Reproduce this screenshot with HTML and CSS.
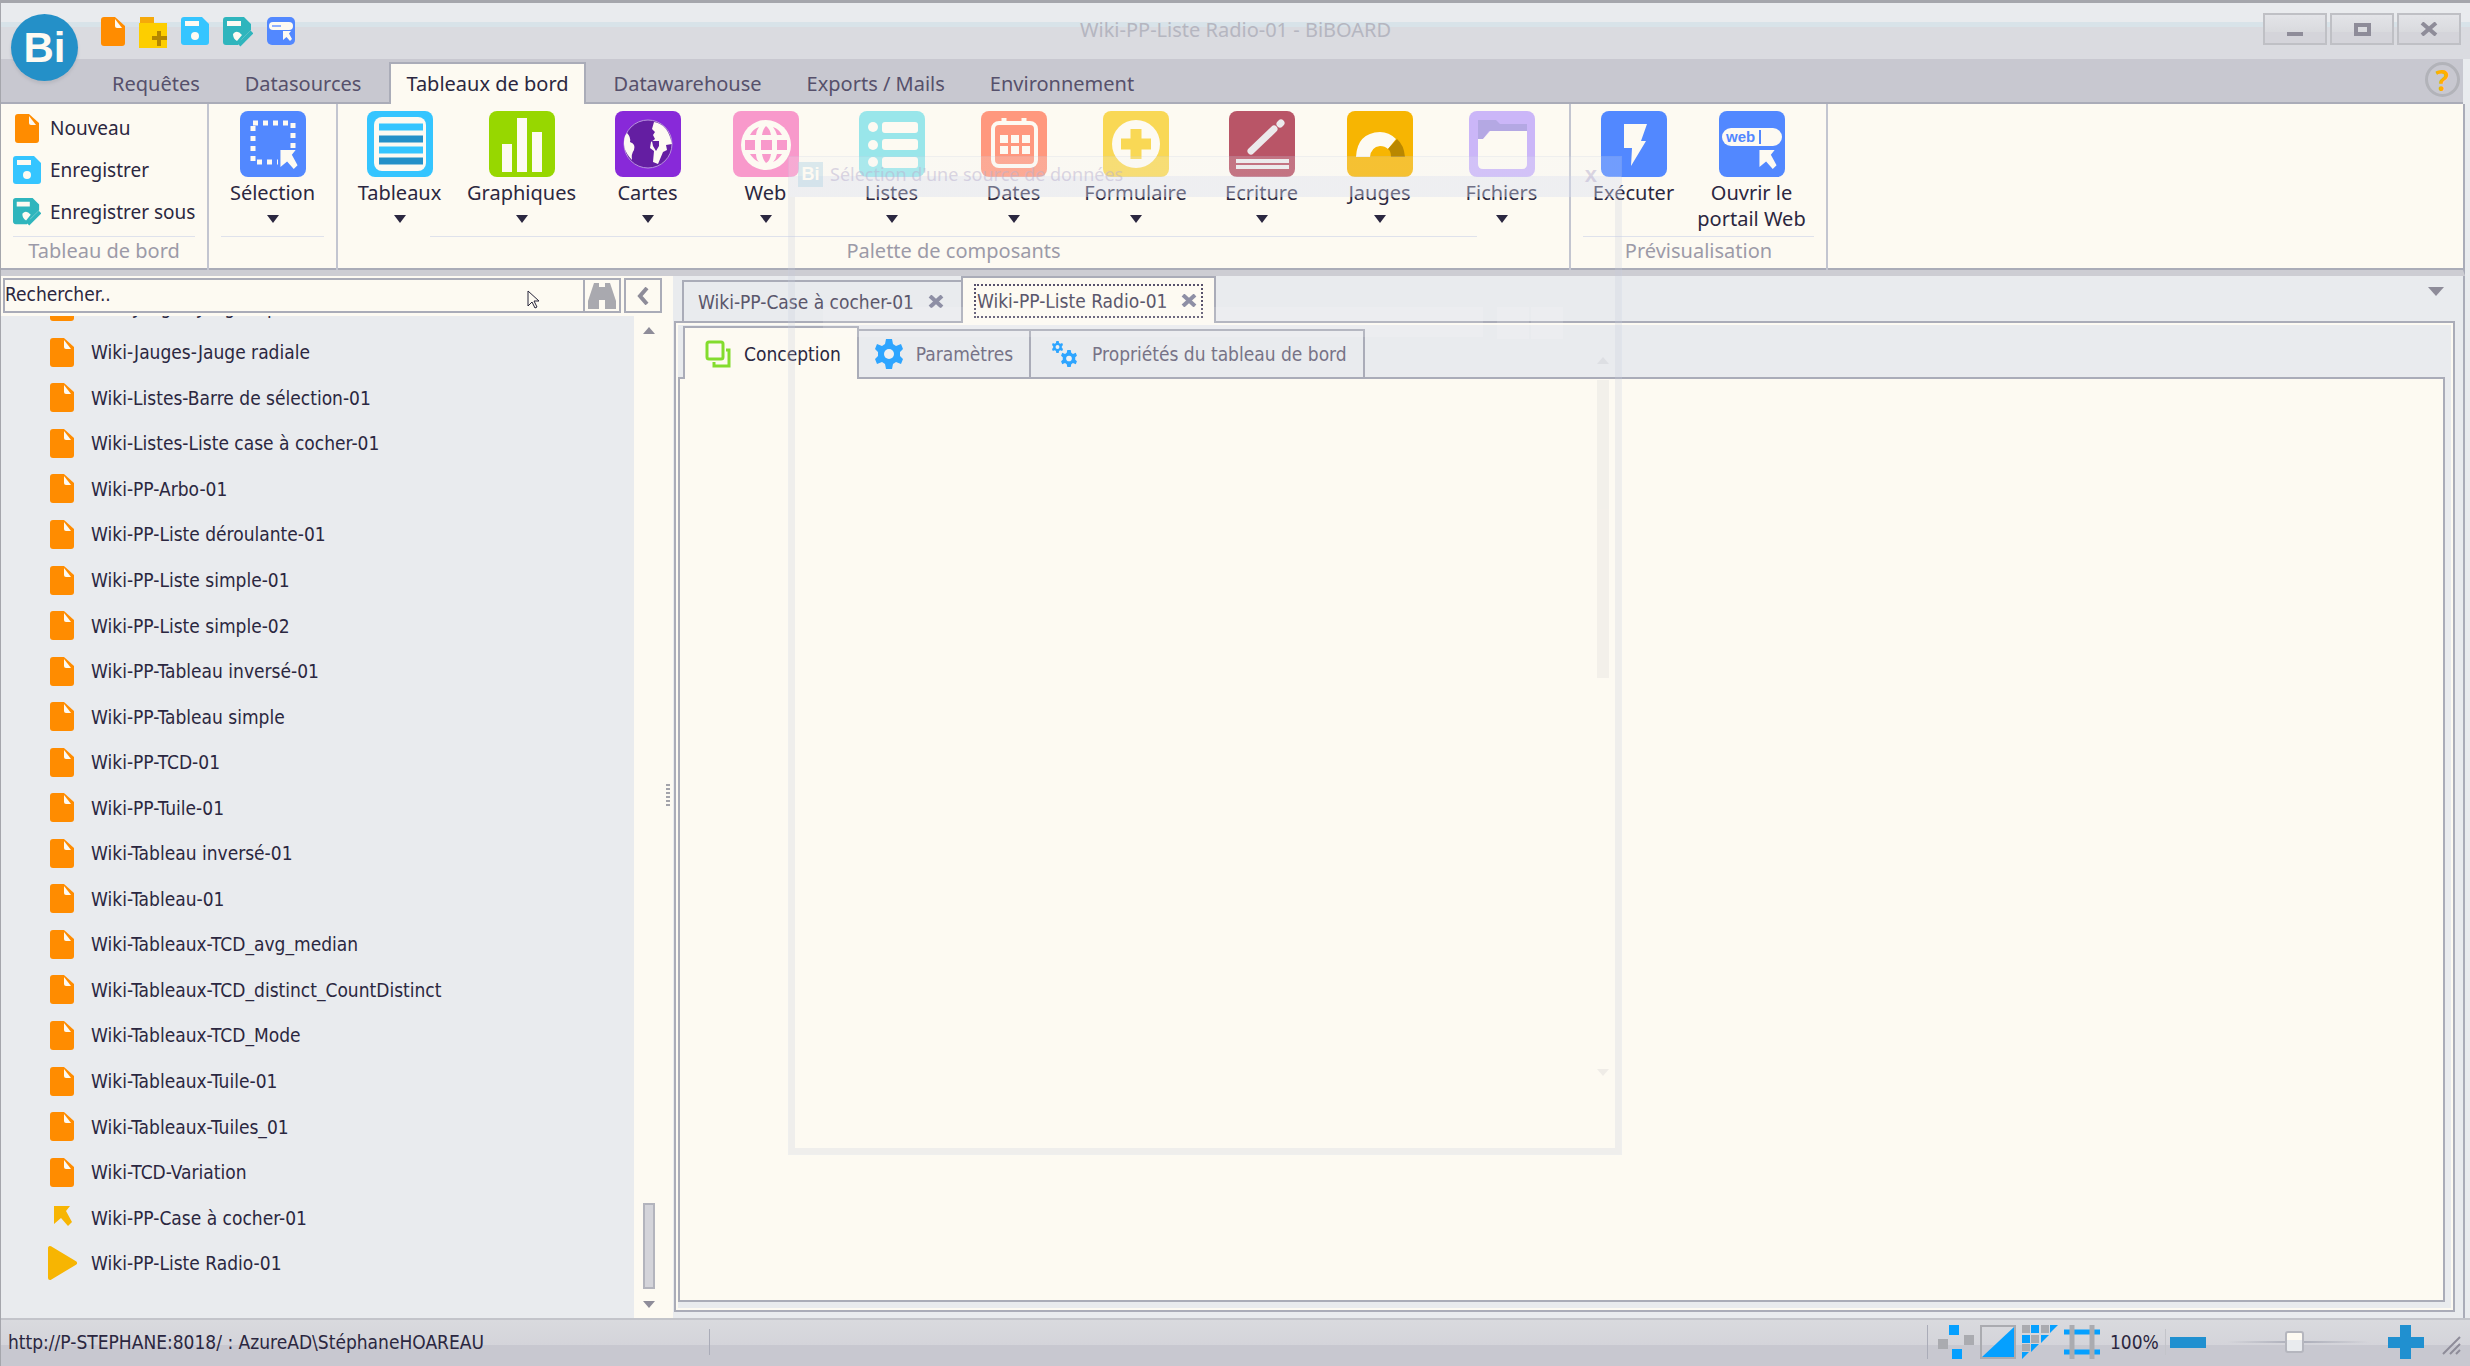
FILE: index.html
```html
<!DOCTYPE html>
<html lang="fr">
<head>
    <meta charset="UTF-8">
    <title>Wiki-PP-Liste Radio-01 - BiBOARD</title>
    <link rel="stylesheet" href="styles.css">
</head>
<body>
<svg class="sprite" aria-hidden="true">
    <symbol id="doc" viewBox="0 0 24 29">
        <path fill="#ff8c00" d="M3 0h11l10 9v17q0 3-3 3H3q-3 0-3-3V3q0-3 3-3z"/>
        <path fill="#fdfaf2" d="M14 2l7 9h-5q-2 0-2-2z"/>
    </symbol>
    <symbol id="save" viewBox="0 0 28 28">
        <path fill="#35c5ff" d="M3 0h18l7 7v18q0 3-3 3H3q-3 0-3-3V3q0-3 3-3z"/>
        <path fill="#fdfaf2" d="M4 4h14v5H4z"/>
        <circle cx="14" cy="19" r="4" fill="#fdfaf2"/>
    </symbol>
    <symbol id="saveas" viewBox="0 0 30 30">
        <path fill="#2fb5bd" d="M3 0h18l7 7v6l-9 9-4 6H3q-3 0-3-3V3q0-3 3-3z"/>
        <path fill="#fdfaf2" d="M4 4h14v5H4zM10 17q4-5 9 1l-5 6q-4-2-4-7z"/>
        <path stroke="#2fb5bd" stroke-width="4" d="M16 28L29 15"/>
    </symbol>
    <symbol id="pointer" viewBox="0 0 18 20">
        <path d="M0 0h16l-4 5 6 11-4 4-7-8-7 6z"/>
    </symbol>
    <symbol id="gear" viewBox="0 0 28 30">
        <path fill="#2ea5ff" d="M11 0h6l1 5 3 2 5-2 2 5-3 3v4l3 3-2 5-5-2-3 2-1 5h-6l-1-5-3-2-5 2-2-5 3-3v-4l-3-3 2-5 5 2 3-2z"/>
        <circle cx="14" cy="15" r="5" fill="#eff0f2"/>
    </symbol>
</svg>

<header class="titlebar">
    <button class="logo">Bi</button>
    <nav class="quick">
        <button aria-label="Nouveau"><svg width="24" height="29"><use href="#doc"/></svg></button>
        <button aria-label="Ouvrir">
            <svg width="28" height="31" viewBox="0 0 28 31"><path fill="#f5a90a" d="M1 0h14v7H1z"/><path fill="#fdce00" d="M0 6h28v25H0z"/><path stroke="#b48600" stroke-width="4" d="M20 14v15M13 21h15"/></svg>
        </button>
        <button aria-label="Enregistrer"><svg width="28" height="28"><use href="#save"/></svg></button>
        <button aria-label="Enregistrer sous"><svg width="30" height="30"><use href="#saveas"/></svg></button>
        <button aria-label="Portail Web">
            <svg width="28" height="28" viewBox="0 0 28 28"><rect width="28" height="28" rx="5" fill="#5288ff"/><rect x="2" y="5" width="24" height="8" rx="4" fill="#fdfaf2"/><path stroke="#8fb0ff" stroke-width="2" d="M5 9h9"/><use href="#pointer" x="16" y="14" width="9" height="10" fill="#fdfaf2"/></svg>
        </button>
    </nav>
    <h1>Wiki-PP-Liste Radio-01 - BiBOARD</h1>
    <div class="window-buttons">
        <button aria-label="Réduire"><svg width="18" height="14"><path fill="#8e8c99" d="M1 10h16v4H1z"/></svg></button>
        <button aria-label="Agrandir"><svg width="18" height="14"><rect x="3" y="3" width="13" height="9" fill="none" stroke="#8e8c99" stroke-width="4"/></svg></button>
        <button aria-label="Fermer"><svg width="18" height="14"><path stroke="#8e8c99" stroke-width="4" d="M2 1l14 12M16 1L2 13"/></svg></button>
    </div>
</header>

<nav class="menu">
    <button>Requêtes</button>
    <button>Datasources</button>
    <button class="active">Tableaux de bord</button>
    <button>Datawarehouse</button>
    <button>Exports / Mails</button>
    <button>Environnement</button>
    <button class="help" aria-label="Aide">?</button>
</nav>

<section class="ribbon">
    <div class="group group-board">
        <div class="items small">
            <button><svg width="28" height="29"><use href="#doc"/></svg>Nouveau</button>
            <button><svg width="28" height="28"><use href="#save"/></svg>Enregistrer</button>
            <button><svg width="28" height="30"><use href="#saveas"/></svg>Enregistrer sous</button>
        </div>
        <h2>Tableau de bord</h2>
    </div>
    <div class="group group-select">
        <div class="items">
            <button class="tool arrow">
                <svg viewBox="0 0 66 66"><rect width="66" height="66" rx="8" fill="#5288ff"/><path fill="none" stroke="#fdfaf2" stroke-width="5" stroke-dasharray="5 5" d="M13 12h40v39H13z"/><path fill="#5288ff" d="M38 38h28v20H38z"/><use href="#pointer" x="40" y="39" width="18" height="19" fill="#fdfaf2"/></svg>
                Sélection
            </button>
        </div>
        <h2></h2>
    </div>
    <div class="group group-palette">
        <div class="items">
            <button class="tool arrow">
                <svg viewBox="0 0 66 66"><rect width="66" height="66" rx="8" fill="#35c5ff"/><rect x="7" y="6" width="52" height="54" rx="8" fill="#fdfaf2"/><path stroke="#35c5ff" stroke-width="7" d="M12 16h44M12 39h44"/><path stroke="#2490c8" stroke-width="7" d="M12 28h44M12 50h44"/></svg>
                Tableaux
            </button>
            <button class="tool arrow">
                <svg viewBox="0 0 66 66"><rect width="66" height="66" rx="8" fill="#97d700"/><path fill="#fdfaf2" d="M13 33h10v28H13zM28 7h10v54H28zM43 21h10v40H43z"/></svg>
                Graphiques
            </button>
            <button class="tool arrow far">
                <svg viewBox="0 0 66 66"><rect width="66" height="66" rx="8" fill="#8829d9"/><circle cx="33" cy="33" r="24" fill="#641ea2" stroke="#b793dc"/><path fill="#fdfaf2" d="M12 22q4 4 3 9 6 2 4 8-3 4-2 10Q6 38 10 25zM39 11q14 2 18 22l-6 1 1 5-4 2-5 12-5-2 1-11-4-3 1-6 4-3-2-4 2-3-3-3z"/><path fill="#641ea2" d="M37 30h7v5l-3 5-3-5z"/></svg>
                Cartes
            </button>
            <button class="tool arrow near">
                <svg viewBox="0 0 66 66"><rect width="66" height="66" rx="8" fill="#f899cb"/><circle cx="33" cy="34" r="25" fill="#fdfaf2"/><path fill="#f899cb" d="M28 29h11v10H28zM12 29h10v10H12zM44 29h10v10H44zM29 24q1-6 4-9 4 3 5 9zM29 43h9q-1 7-5 9-3-3-4-9zM17 24q3-6 9-8-3 4-3 8zM49 24q-3-6-9-8 3 4 4 8zM17 43h6q0 5 3 8-6-3-9-8zM49 43h-5q-1 5-4 8 6-3 9-8z"/></svg>
                Web
            </button>
            <button class="tool arrow far">
                <svg viewBox="0 0 66 66"><rect width="66" height="66" rx="8" fill="#99e6ea"/><g fill="#fdfaf2"><circle cx="14" cy="16" r="5"/><circle cx="14" cy="34" r="5"/><circle cx="14" cy="51" r="5"/><rect x="23" y="11" width="36" height="11" rx="3"/><rect x="23" y="28" width="36" height="11" rx="3"/><rect x="23" y="46" width="36" height="11" rx="3"/></g></svg>
                Listes
            </button>
            <button class="tool arrow">
                <svg viewBox="0 0 66 66"><rect width="66" height="66" rx="8" fill="#ff987e"/><rect x="12" y="12" width="43" height="43" rx="6" fill="none" stroke="#fdfaf2" stroke-width="4"/><path stroke="#fdfaf2" stroke-width="5" d="M23 7v7M43 7v7"/><path stroke="#fdfaf2" stroke-width="8" stroke-dasharray="8 3" d="M19 28h30M19 39h30"/></svg>
                Dates
            </button>
            <button class="tool arrow">
                <svg viewBox="0 0 66 66"><rect width="66" height="66" rx="8" fill="#f9d855"/><circle cx="33" cy="33" r="24" fill="#fdfaf2"/><path stroke="#f9d855" stroke-width="11" d="M33 18v30M18 33h30"/></svg>
                Formulaire
            </button>
            <button class="tool arrow far">
                <svg viewBox="0 0 66 66"><rect width="66" height="66" rx="8" fill="#b95567"/><path stroke="#eceaec" stroke-width="7" stroke-linecap="round" d="M22 40L45 18M51 13l1-1"/><path stroke="#eceaec" stroke-width="4" d="M7 50h53M7 56h53"/></svg>
                Ecriture
            </button>
            <button class="tool arrow near">
                <svg viewBox="0 0 66 66"><rect width="66" height="66" rx="8" fill="#f7b502"/><path fill="#fdfaf2" d="M9 46Q10 22 33 21q9 0 16 7l-8 10q-3-3-8-3-9 1-10 11z"/><path fill="#b98700" d="M50 28q7 6 8 18H44q0-6-3-8z"/></svg>
                Jauges
            </button>
            <button class="tool arrow">
                <svg viewBox="0 0 66 66"><rect width="66" height="66" rx="8" fill="#cbb6f8"/><path fill="#b4a8e3" d="M9 9h18l4 4h27v7H20l-6 8H9z"/><path fill="#fdfaf2" d="M21 20h37v33q0 5-5 5H14q-5 0-5-5V28h5z"/></svg>
                Fichiers
            </button>
        </div>
        <h2>Palette de composants</h2>
    </div>
    <div class="group group-preview">
        <div class="items">
            <button class="tool">
                <svg viewBox="0 0 66 66"><rect width="66" height="66" rx="8" fill="#5288ff"/><path fill="#fdfaf2" d="M23 13h23l-6 17h5L30 55l1-18h-8z"/></svg>
                Exécuter
            </button>
            <button class="tool near">
                <svg viewBox="0 0 66 66"><rect width="66" height="66" rx="8" fill="#5288ff"/><rect x="3" y="17" width="60" height="18" rx="9" fill="#fdfaf2"/><text class="web-text" x="7" y="31">web</text><path stroke="#5288ff" stroke-width="2" d="M41 19v14"/><use href="#pointer" x="40" y="39" width="18" height="19" fill="#fdfaf2"/></svg>
                Ouvrir le<br>portail Web
            </button>
        </div>
        <h2>Prévisualisation</h2>
    </div>
</section>

<main>
    <aside>
        <div class="search">
            <input type="text" aria-label="Rechercher" value="Rechercher..">
            <button aria-label="Lancer la recherche"><svg width="28" height="26" viewBox="0 0 28 26"><path fill="#a9a9af" d="M6 0h5v4h6V0h5l2 6 4 12v8H17v-9h-6v9H0v-8L4 6z"/></svg></button>
            <button class="collapse" aria-label="Replier"><svg width="12" height="18"><path fill="none" stroke="#8e8c99" stroke-width="4" d="M10 1L3 9l7 8"/></svg></button>
            <svg class="cursor" width="13" height="19"><path fill="#fdfaf2" stroke="#26243a" d="M1 1v15l4-4 3 6 2-1-3-6h5z"/></svg>
        </div>
        <div class="tree">
            <ul>
                <li><svg><use href="#doc"/></svg>Wiki-Jauges-Jauge à plat</li>
                <li><svg><use href="#doc"/></svg>Wiki-Jauges-Jauge radiale</li>
                <li><svg><use href="#doc"/></svg>Wiki-Listes-Barre de sélection-01</li>
                <li><svg><use href="#doc"/></svg>Wiki-Listes-Liste case à cocher-01</li>
                <li><svg><use href="#doc"/></svg>Wiki-PP-Arbo-01</li>
                <li><svg><use href="#doc"/></svg>Wiki-PP-Liste déroulante-01</li>
                <li><svg><use href="#doc"/></svg>Wiki-PP-Liste simple-01</li>
                <li><svg><use href="#doc"/></svg>Wiki-PP-Liste simple-02</li>
                <li><svg><use href="#doc"/></svg>Wiki-PP-Tableau inversé-01</li>
                <li><svg><use href="#doc"/></svg>Wiki-PP-Tableau simple</li>
                <li><svg><use href="#doc"/></svg>Wiki-PP-TCD-01</li>
                <li><svg><use href="#doc"/></svg>Wiki-PP-Tuile-01</li>
                <li><svg><use href="#doc"/></svg>Wiki-Tableau inversé-01</li>
                <li><svg><use href="#doc"/></svg>Wiki-Tableau-01</li>
                <li><svg><use href="#doc"/></svg>Wiki-Tableaux-TCD_avg_median</li>
                <li><svg><use href="#doc"/></svg>Wiki-Tableaux-TCD_distinct_CountDistinct</li>
                <li><svg><use href="#doc"/></svg>Wiki-Tableaux-TCD_Mode</li>
                <li><svg><use href="#doc"/></svg>Wiki-Tableaux-Tuile-01</li>
                <li><svg><use href="#doc"/></svg>Wiki-Tableaux-Tuiles_01</li>
                <li><svg><use href="#doc"/></svg>Wiki-TCD-Variation</li>
                <li><svg viewBox="0 0 32 29"><use href="#pointer" x="8" y="3" width="18" height="20" fill="#f7b502"/></svg>Wiki-PP-Case à cocher-01</li>
                <li><svg viewBox="0 0 32 36"><path fill="#f7b502" stroke="#f7b502" stroke-width="4" stroke-linejoin="round" d="M4 3v30l25-15z"/></svg>Wiki-PP-Liste Radio-01</li>
            </ul>
            <div class="scrollbar">
                <i class="up"></i>
                <i class="thumb"></i>
                <i class="down"></i>
            </div>
        </div>
        <i class="grip"></i>
    </aside>

    <section class="workspace">
        <div class="doc-tabs">
            <div class="doc-tab"><span>Wiki-PP-Case à cocher-01 <button aria-label="Fermer l'onglet"><svg width="16" height="13"><path stroke="#8e8fa5" stroke-width="4" d="M2 1l12 11M14 1L2 12"/></svg></button></span></div>
            <div class="doc-tab active"><span>Wiki-PP-Liste Radio-01 <button aria-label="Fermer l'onglet"><svg width="16" height="13"><path stroke="#8e8fa5" stroke-width="4" d="M2 1l12 11M14 1L2 12"/></svg></button></span></div>
            <button class="tab-list" aria-label="Liste des onglets"></button>
        </div>
        <div class="frame">
            <div class="view-tabs">
                <button class="active"><svg width="26" height="28" viewBox="0 0 26 28"><g fill="none" stroke="#83dc2e" stroke-width="3"><rect x="2" y="2" width="16" height="17" rx="2"/><path d="M21 10h3v16H9v-4"/></g></svg>Conception</button>
                <button><svg width="28" height="30"><use href="#gear"/></svg>Paramètres</button>
                <button class="props"><svg width="28" height="28"><use href="#gear" x="1" y="1" width="11" height="12"/><use href="#gear" x="10" y="10" width="16" height="17"/></svg>Propriétés du tableau de bord</button>
            </div>
            <div class="canvas"></div>
        </div>
    </section>
</main>

<footer>
    <span class="server">http://P-STEPHANE:8018/ : AzureAD\StéphaneHOAREAU</span>
    <div class="tools">
        <button aria-label="Points"><svg width="36" height="34"><path fill="#05a0ff" d="M11 0h10v10H11zM14 24h10v10H14z"/><path fill="#aaabb0" d="M0 14h10v10H0zM26 10h10v10H26z"/></svg></button>
        <button aria-label="Contraste"><svg width="36" height="34"><path fill="none" stroke="#aaabb0" stroke-width="2" d="M1 1h34v32H1z"/><path fill="#05a0ff" d="M34 2v30H2z"/></svg></button>
        <button aria-label="Grille"><svg width="36" height="34"><path fill="#05a0ff" d="M9 0h8v8H9zM28 0h8l-8 8zM0 10h8v8H0zM19 10h8l-8 8zM9 19h8l-8 8zM0 27h7l-7 7z"/><path fill="#aaabb0" d="M0 0h8v8H0zM19 0h8v8h-8zM9 10h8v8H9zM0 19h8v7H0z"/></svg></button>
        <button aria-label="Cadre"><svg width="36" height="34"><path stroke="#05a0ff" stroke-width="5" d="M0 7h36M0 27h36"/><path stroke="#aaabb0" stroke-width="5" d="M8 0v34M28 0v34"/></svg></button>
    </div>
    <label class="zoom" for="zoom">100%</label>
    <button aria-label="Zoom arrière"><svg width="36" height="34"><path fill="#2090d0" d="M0 12h36v11H0z"/></svg></button>
    <input type="range" id="zoom" min="0" max="200" value="95">
    <button aria-label="Zoom avant"><svg width="36" height="34"><path fill="#2090d0" d="M0 12h12V0h11v12h13v11H23v11H12V23H0z"/></svg></button>
    <svg class="resize" width="20" height="20"><path stroke="#8e8c99" stroke-width="2" d="M1 18L18 1M8 18L18 8M14 18l4-4"/></svg>
</footer>

<!-- dialog fading out -->
<div class="ghost">
    <div class="ghost-title"><b>Bi</b><span>Sélection d'une source de données</span><i>x</i></div>
    <div class="ghost-body">
        <div class="ghost-fields"><i></i><i></i><i></i></div>
        <div class="ghost-scroll"><i class="up"></i><i class="bar"></i><i class="down"></i></div>
    </div>
</div>
</body>
</html>
```
FILE: styles.css
```css
* {
    box-sizing: border-box;
}

body {
    margin: 0;
    min-height: 100vh;
    display: flex;
    flex-direction: column;
    position: relative;
    border-top: 3px solid #a5a6ac;
    border-left: 1px solid #a5a6ac;
    background: #e9ebee;
    color: #2b2740;
    font: 20px/26px "Noto Sans", "Open Sans", sans-serif;
    overflow-x: hidden;
}

button {
    border: none;
    background: none;
    padding: 0;
    margin: 0;
    color: inherit;
    font: inherit;
}

h1, h2, ul {
    margin: 0;
    padding: 0;
    font-size: inherit;
    font-weight: normal;
}

svg {
    display: block;
    flex-shrink: 0;
}

.sprite {
    position: absolute;
    width: 0;
    height: 0;
}

/* title bar */
.titlebar {
    height: 56px;
    display: grid;
    grid-template-columns: 1fr auto 1fr;
    background: linear-gradient(#e9ebee 19px, #d8e3e9 19px, #d8e3e9 24px, #dadbe0 24px);
}

.titlebar h1 {
    color: #b5b6c0;
    line-height: 54px;
}

.logo {
    position: absolute;
    left: 10px;
    top: 11px;
    width: 67px;
    height: 67px;
    border-radius: 50%;
    background: #2490c8;
    color: #fdfaf2;
    font: bold 42px/66px "Liberation Sans", sans-serif;
    box-shadow: 0 3px 3px #b9bac2;
}

.quick {
    display: flex;
    align-items: flex-start;
    gap: 14px;
    padding: 14px 0 0 100px;
}

.window-buttons {
    grid-column: 3;
    display: flex;
    justify-content: flex-end;
    gap: 3px;
    padding: 10px 9px 0 0;
}

.window-buttons button {
    width: 64px;
    height: 32px;
    display: flex;
    align-items: center;
    justify-content: center;
    border: 2px solid #bfc0c5;
    background: linear-gradient(#e3e4e8, #d9dade 60%, #d4d4da 60%);
}

/* menu */
.menu {
    height: 45px;
    display: flex;
    align-items: flex-end;
    gap: 11px;
    padding: 0 10px 0 94px;
    margin-right: 7px;
    background: #c8c8d0;
    border-bottom: 2px solid #aaacb8;
    color: #56506b;
}

.menu button {
    height: 40px;
    padding: 2px 15px 0;
    border: 2px solid transparent;
    border-bottom: none;
}

.menu .active {
    height: 42px;
    margin-bottom: -2px;
    padding-bottom: 2px;
    background: #fdfaf2;
    border-color: #aaacb8;
    color: #2b2740;
}

.menu .help {
    width: 35px;
    height: 35px;
    margin: 0 -7px 5px auto;
    padding: 0;
    border: 3px solid #b2b3b9;
    border-radius: 50%;
    color: #ffb000;
    font: bold 28px/28px "Open Sans", sans-serif;
}

/* ribbon */
.ribbon {
    display: flex;
    height: 172px;
    margin-right: 5px;
    background: #fdfaf2;
    border-right: 2px solid #aaacb8;
    border-bottom: 6px solid #cdcdd3;
    box-shadow: inset 0 -2px #aaacb8;
}

.group {
    display: flex;
    flex-direction: column;
    padding: 7px 12px 2px;
    border-right: 2px solid #c3c5d0;
}

.group-board {
    width: 208px;
    padding-top: 3px;
}

.group-select {
    width: 129px;
}

.group-palette {
    width: 1233px;
}

.group-palette .items {
    padding-right: 6px;
}

.group-preview {
    width: 257px;
}

.group-preview .items {
    padding-right: 12px;
}

.items {
    flex: 1;
    display: flex;
    justify-content: center;
}

.small {
    flex-direction: column;
    justify-content: flex-start;
    font-size: 19px;
}

.small button {
    height: 42px;
    display: flex;
    align-items: center;
    gap: 9px;
    white-space: nowrap;
}

.group h2 {
    height: 32px;
    border-top: 1px solid #dfe2ec;
    color: #9c9aa8;
    line-height: 28px;
    text-align: center;
}

.group-palette h2 {
    margin: 0 80px;
}

.tool {
    width: 106px;
    margin-left: 16px;
    display: flex;
    flex-direction: column;
    align-items: center;
    flex-shrink: 0;
    white-space: nowrap;
}

.tool:first-child {
    margin-left: 0;
}

.tool.far {
    margin-left: 20px;
}

.tool.near {
    margin-left: 12px;
}

.tool svg {
    width: 66px;
    height: 66px;
    margin-bottom: 3px;
}

.tool.arrow:after {
    content: "";
    margin-top: 9px;
    border: 6px solid transparent;
    border-top: 8px solid #2b2740;
    border-bottom: none;
}

.web-text {
    fill: #5288ff;
    font: bold 15px "Liberation Sans", sans-serif;
}

/* main area */
main {
    flex: 1;
    display: flex;
    margin-right: 5px;
    border-right: 2px solid #aaacb8;
    font-family: "DejaVu Sans Condensed", "DejaVu Sans", sans-serif;
    font-size: 19px;
}

aside {
    width: 672px;
    display: flex;
    flex-direction: column;
    position: relative;
    background: #fdfaf2;
}

.search {
    display: flex;
    height: 40px;
    padding: 2px 11px 3px 2px;
    position: relative;
}

.search input {
    flex: 1;
    min-width: 0;
    border: 2px solid #aaacb8;
    border-right: none;
    padding: 0 0 4px;
    background: #fdfaf2;
    color: #2b2740;
    font: inherit;
}

.search button {
    width: 38px;
    display: flex;
    align-items: center;
    justify-content: center;
    border: 2px solid #aaacb8;
}

.search .collapse {
    margin-left: 3px;
}

.cursor {
    position: absolute;
    left: 526px;
    top: 14px;
}

.tree {
    flex: 1;
    display: flex;
    overflow: hidden;
}

.tree ul {
    flex: 1;
    display: grid;
    grid-auto-rows: 1fr;
    margin-top: -32px;
    padding-bottom: 32px;
    background: #e9ebee;
    list-style: none;
}

.tree li {
    display: flex;
    align-items: center;
    gap: 13px;
    padding-left: 45px;
}

.tree li svg {
    width: 32px;
    height: 29px;
}

.tree li:last-child svg {
    height: 36px;
}

.scrollbar {
    width: 39px;
    display: flex;
    flex-direction: column;
    align-items: center;
    padding: 11px 9px 10px 0;
}

.up, .down {
    border: 6px solid transparent;
    border-bottom: 7px solid #8e8c99;
    border-top: none;
}

.down {
    border-top: 7px solid #8e8c99;
    border-bottom: none;
}

.thumb {
    width: 12px;
    height: 86px;
    margin: auto 0 12px;
    border: 2px solid #b3b4bd;
    background: #d4d4da;
}

.grip {
    position: absolute;
    right: 3px;
    top: 508px;
    width: 4px;
    height: 24px;
    background: repeating-linear-gradient(#a3a3aa 0 2px, transparent 2px 4px);
}

.workspace {
    flex: 1;
    display: flex;
    flex-direction: column;
    padding: 0 8px 6px 1px;
    color: #5a566b;
}

.doc-tabs {
    display: flex;
    align-items: flex-end;
    height: 45px;
    padding-left: 8px;
}

.doc-tab {
    height: 41px;
    display: flex;
    align-items: center;
    padding: 0 11px;
    border: 2px solid #aaacb8;
    border-right: none;
    border-bottom: none;
    background: #e9ebee;
    white-space: nowrap;
}

.doc-tab span {
    display: flex;
    align-items: center;
    gap: 14px;
    height: 34px;
    padding: 0 4px 0 1px;
    border: 2px solid transparent;
}

.doc-tab.active {
    height: 47px;
    margin-bottom: -2px;
    position: relative;
    border-right: 2px solid #aaacb8;
    background: #fdfaf2;
}

.doc-tab.active span {
    border: 2px dotted #56506b;
}

.tab-list {
    align-self: center;
    margin: 0 11px 14px auto;
    border: 8px solid transparent;
    border-top: 9px solid #8e8c99;
    border-bottom: none;
}

.frame {
    flex: 1;
    display: flex;
    flex-direction: column;
    padding: 2px 8px 8px 2px;
    border: 2px solid #aaacb8;
    box-shadow: inset 0 0 0 2px #fdfaf2;
}

.view-tabs {
    height: 52px;
    display: flex;
    align-items: flex-end;
    padding-left: 5px;
    color: #777387;
}

.view-tabs button {
    height: 48px;
    display: flex;
    align-items: center;
    gap: 13px;
    padding: 0 16px;
    border: 2px solid #aaacb8;
    border-left: none;
    border-bottom: none;
    white-space: nowrap;
}

.view-tabs .active {
    height: 53px;
    margin-bottom: -2px;
    padding: 0 16px 0 20px;
    position: relative;
    border-left: 2px solid #aaacb8;
    background: #fdfaf2;
    color: #2b2740;
}

.view-tabs .props {
    padding-left: 20px;
}

.canvas {
    flex: 1;
    border: 2px solid #aaacb8;
    background: #fdfaf2;
}

/* status bar */
footer {
    height: 48px;
    display: flex;
    align-items: center;
    padding: 0 8px 2px 7px;
    border-top: 2px solid #c3c4ca;
    background: linear-gradient(#d9dade, #d4d4da 55%, #c8c8d0 55%);
    font: 19px/26px "DejaVu Sans Condensed", "DejaVu Sans", sans-serif;
}

.server {
    width: 702px;
    border-right: 1px solid #aaacb8;
}

.tools {
    display: flex;
    gap: 6px;
    margin-left: auto;
    padding: 0 10px;
    border-left: 1px solid #aaacb8;
}

.zoom {
    width: 56px;
    margin-right: 4px;
    border-right: 1px solid #c3c4ca;
}

footer input {
    width: 142px;
    height: 22px;
    margin: 0 19px 0 21px;
    appearance: none;
    background: linear-gradient(90deg, transparent, #aaacb8, transparent) center / 100% 2px no-repeat;
}

footer input::-webkit-slider-thumb {
    appearance: none;
    width: 19px;
    height: 22px;
    border: 2px solid #b5b6be;
    border-radius: 3px;
    background: linear-gradient(#fdfaf2 40%, #e9ebee 40%);
}

.resize {
    margin: 8px 0 0 18px;
}

/* fading dialog, drawn over the page */
.ghost {
    position: absolute;
    left: 787px;
    top: 153px;
    width: 834px;
    height: 999px;
    display: flex;
    flex-direction: column;
    border: 1px solid #c8d0e440;
    pointer-events: none;
}

.ghost-title {
    height: 40px;
    display: flex;
    align-items: center;
    gap: 7px;
    padding: 0 24px 6px 9px;
    background: linear-gradient(#eef1f433 19px, #d8def066 19px);
    color: #b9b0cf80;
    font-size: 18px;
}

.ghost-title b {
    width: 25px;
    height: 25px;
    background: #b9d8e680;
    color: #fdfaf2;
    font: bold 18px/25px "Liberation Sans", sans-serif;
    text-align: center;
}

.ghost-title i {
    margin-left: auto;
    font: bold 22px/25px "Liberation Sans", sans-serif;
}

.ghost-body {
    flex: 1;
    display: flex;
    flex-direction: column;
    border: 6px solid #c8cddc40;
    border-top: none;
}

.ghost-fields {
    display: flex;
    align-items: flex-start;
    gap: 2px;
    padding: 110px 52px 0 28px;
}

.ghost-fields i {
    width: 32px;
    height: 32px;
    background: #ffffff22;
}

.ghost-fields i:first-child {
    flex: 1;
    height: 30px;
    margin-right: 12px;
}

.ghost-scroll {
    flex: 1;
    display: flex;
    flex-direction: column;
    align-items: center;
    align-self: flex-end;
    width: 24px;
    padding: 18px 0 72px;
    opacity: .12;
}

.ghost-scroll .bar {
    width: 12px;
    height: 298px;
    margin-top: 16px;
    background: #aaacb8;
}

.ghost-scroll .down {
    margin-top: auto;
}
```
